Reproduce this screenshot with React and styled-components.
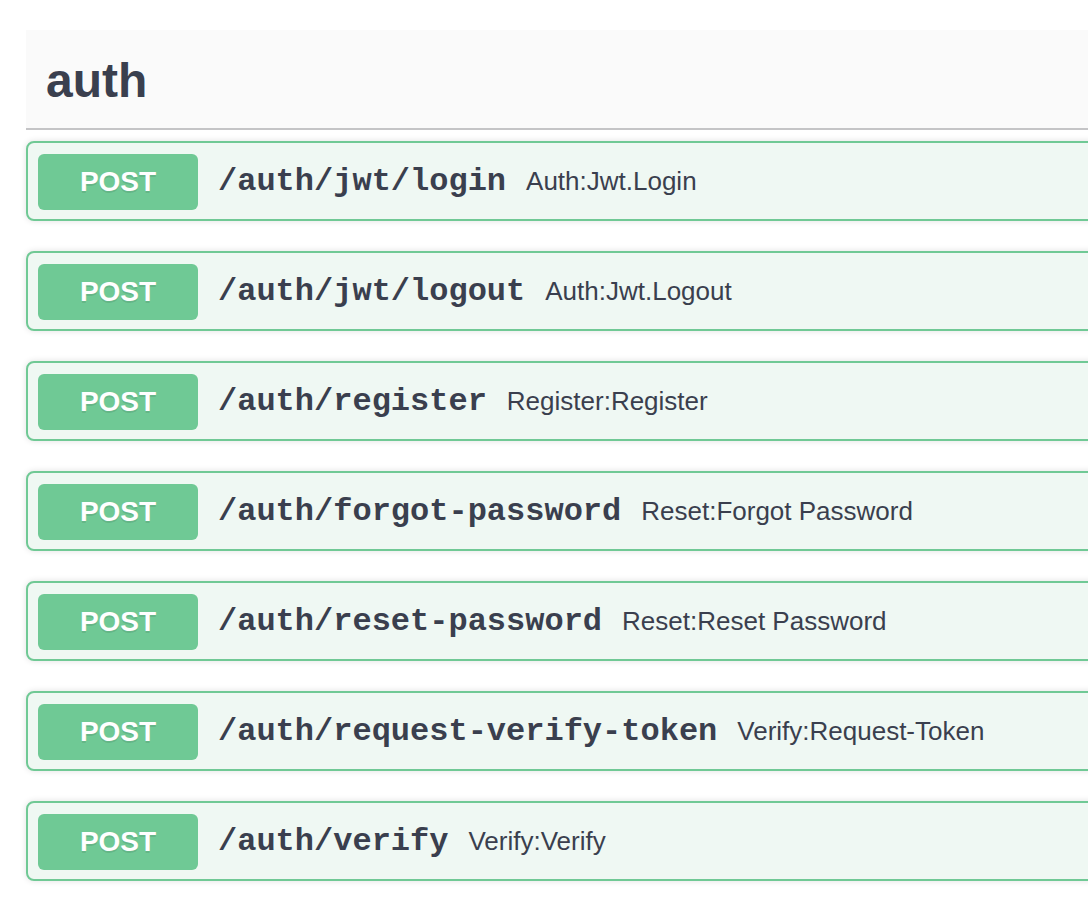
import React from "react";
import styled, { createGlobalStyle } from "styled-components";

const GlobalStyle = createGlobalStyle`
  html, body {
    margin: 0;
    padding: 0;
    background: #fff;
    overflow: hidden;
  }
  body {
    font-family: "Liberation Sans", Arial, sans-serif;
    color: #3b4151;
  }
`;

const endpoints = [
  { path: "/auth/jwt/login", summary: "Auth:Jwt.Login" },
  { path: "/auth/jwt/logout", summary: "Auth:Jwt.Logout" },
  { path: "/auth/register", summary: "Register:Register" },
  { path: "/auth/forgot-password", summary: "Reset:Forgot Password" },
  { path: "/auth/reset-password", summary: "Reset:Reset Password" },
  { path: "/auth/request-verify-token", summary: "Verify:Request-Token" },
  { path: "/auth/verify", summary: "Verify:Verify" },
];

const App = () => {
  return (
    <Page>
      <GlobalStyle />
      <Section>
        <TagHeader>
          <TagTitle>auth</TagTitle>
        </TagHeader>
        <List>
          {endpoints.map((ep) => (
            <Operation key={ep.path}>
              <Method>POST</Method>
              <Path>{ep.path}</Path>
              <Summary>{ep.summary}</Summary>
            </Operation>
          ))}
        </List>
      </Section>
    </Page>
  );
};

export default App;

const Page = styled.div`
  width: 1088px;
  height: 916px;
  padding: 30px 0 0 26px;
  box-sizing: border-box;
  overflow: hidden;
`;

const Section = styled.div`
  width: 1120px;
`;

const TagHeader = styled.div`
  display: flex;
  align-items: center;
  height: 100px;
  padding: 2px 40px 0 20px;
  box-sizing: border-box;
  background: #fafafa;
  border-bottom: 2px solid #c4c4c6;
`;

const TagTitle = styled.h3`
  margin: 0;
  font-size: 48px;
  font-weight: 700;
  color: #3a3f4e;
`;

const List = styled.div`
  display: flex;
  flex-direction: column;
  gap: 30px;
  margin-top: 11px;
`;

const Operation = styled.div`
  display: flex;
  align-items: center;
  height: 80px;
  box-sizing: border-box;
  padding: 1px 10px 0;
  background: #eff8f3;
  border: 2px solid #70c995;
  border-radius: 8px;
  box-shadow: 0 0 6px rgba(0, 0, 0, 0.12);
`;

const Method = styled.span`
  display: flex;
  align-items: center;
  justify-content: center;
  width: 160px;
  height: 56px;
  flex-shrink: 0;
  background: #6fc995;
  border-radius: 6px;
  color: #fff;
  font-size: 28px;
  font-weight: 700;
  text-shadow: 0 2px 0 rgba(0, 0, 0, 0.1);
`;

const Path = styled.span`
  padding: 0 20px;
  font-family: "Liberation Mono", "Courier New", monospace;
  font-weight: 700;
  font-size: 32px;
  color: #3a3f4e;
`;

const Summary = styled.span`
  font-size: 26px;
  color: #3a3f4e;
`;
